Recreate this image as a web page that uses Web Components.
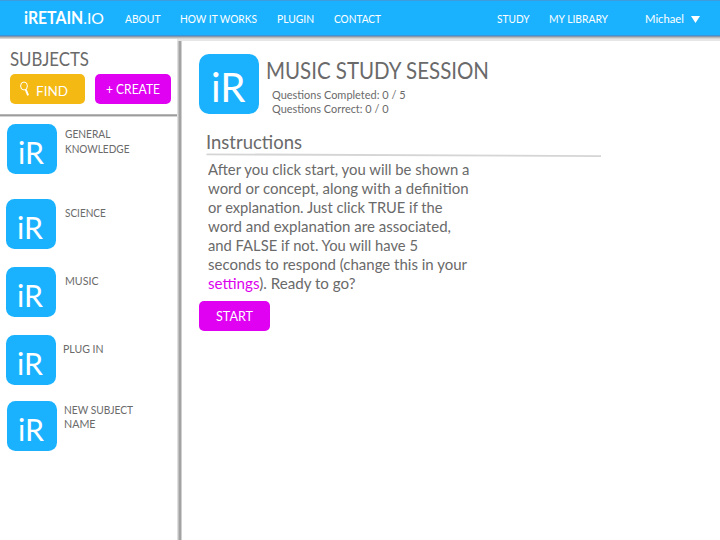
<!DOCTYPE html>
<html lang="en"><head><meta charset="utf-8"><title>iRETAIN.IO</title>
<style>html,body{margin:0;background:#fff;font-family:Lato,"Open Sans",sans-serif;color:#6a6a6a}body{width:720px;height:540px;overflow:hidden}</style>
</head><body><study-app></study-app>
<script>
const attach=(el,html)=>{el.attachShadow({mode:'open'}).innerHTML=html;};

// One line of text: the box is exactly cap-height tall and `w` pixels wide.
customElements.define('fit-text',class extends HTMLElement{
  connectedCallback(){
    if(this.shadowRoot)return;
    const cap=+this.getAttribute('cap'),w=+this.getAttribute('w'),s=cap/.72;
    attach(this,`<style>:host{display:block;flex:none;width:${w}px;height:${cap}px;font-size:${s}px}
      span{display:block;width:max-content;white-space:nowrap;line-height:${s*.666}px;transform-origin:0 50%}</style><span><slot></slot></span>`);
    const span=this.shadowRoot.querySelector('span');
    const n=span.getBoundingClientRect().width;
    if(n)span.style.transform=`scaleX(${w/n})`;
  }
});

customElements.define('text-link',class extends HTMLElement{
  constructor(){super();attach(this,`<style>:host{color:#dc00ee}</style><slot></slot>`);}
});

customElements.define('ir-tile',class extends HTMLElement{
  connectedCallback(){
    if(this.shadowRoot)return;
    const big=this.hasAttribute('big');
    attach(this,`<style>:host{display:block;flex:none;box-sizing:border-box;background:#1ab2ff;color:#fff;
      ${big?'width:60px;height:60px;border-radius:10px;padding:19.2px 0 0 12px':'width:50px;height:50px;border-radius:8.5px;padding:17.5px 0 0 11px'}}</style>
      <fit-text cap="${big?29.6:22.3}" w="${big?34.5:26}">iR</fit-text>`);
  }
});

customElements.define('app-button',class extends HTMLElement{
  constructor(){super();attach(this,`<style>:host{display:flex;box-sizing:border-box;flex:none;width:var(--w,75.5px);height:30px;border-radius:5px;background:var(--bg,#e000f2);color:#fff;padding:var(--pad)}
    </style><slot></slot>`);}
});

customElements.define('top-bar',class extends HTMLElement{
  constructor(){super();attach(this,`<style>
    :host{display:block;height:41px;background:linear-gradient(#3f9ade 0 1px,#1ab2ff 1px 35px,#3c93d6 35px 36px,#8597ad 36px 37px,#b9b9b9 37px 38px,#d6d6d6 38px 39px,#e6e6e6 39px 41px);color:#fff}
    nav{display:flex;align-items:flex-end;height:23.3px;padding:0 20px 0 24px;gap:20px}
    .logo{margin:0 .5px -1.6px 0}.right{margin-left:auto}.user{margin-left:17px}
    svg{margin:0 0 .4px -12.5px;flex:none}
    b{font-weight:700}</style>
    <nav><fit-text class="logo" cap="11.6" w="80"><b>iRETAIN</b>.IO</fit-text>
    <fit-text cap="8" w="35.5">ABOUT</fit-text><fit-text cap="8" w="77">HOW IT WORKS</fit-text>
    <fit-text cap="8" w="37">PLUGIN</fit-text><fit-text cap="8" w="47">CONTACT</fit-text>
    <fit-text class="right" cap="8" w="32.5">STUDY</fit-text><fit-text cap="8" w="59" style="margin-left:-1px">MY LIBRARY</fit-text>
    <fit-text class="user" cap="8.2" w="39">Michael</fit-text>
    <svg width="9" height="7"><path d="M0 0H9L4.5 7Z" fill="#fff"/></svg></nav>`);}
});

customElements.define('subject-item',class extends HTMLElement{
  constructor(){super();attach(this,`<style>:host{display:flex;height:50px}
    .label{display:flex;flex-direction:column;gap:6.4px;padding:var(--lp)}</style>
    <ir-tile></ir-tile><div class="label"><slot></slot></div>`);}
});

customElements.define('side-bar',class extends HTMLElement{
  constructor(){super();attach(this,`<style>
    :host{display:block;width:182px;box-sizing:border-box;flex:none}
    .head{width:177px;height:78px;box-sizing:border-box;padding:13.5px 0 0 9.5px;background:linear-gradient(#fff 0 75px,#b5b5b5 75px 76px,#9c9c9c 76px 77px,#d4d4d4 77px 78px);}
    .btns{display:flex;gap:10px;margin-top:8px}
    .list{display:grid;grid-template-rows:75px 68px 68px 66px 50px;padding:7px 0 0 6px}
    .fi{margin-right:5.5px;flex:none}</style>
    <div class="head"><fit-text cap="13.3" w="79">SUBJECTS</fit-text>
      <div class="btns"><app-button style="--bg:#f4b913;--pad:7px 0 0 10px">
        <svg class="fi" width="11" height="18" viewBox="0 0 11 18" fill="none" stroke="#fff"><ellipse cx="4" cy="5" rx="3.4" ry="4" stroke-width="1"/><path d="M5.8 8.7L8.1 14.3" stroke-width="1.9"/></svg>
        <fit-text cap="10.3" w="32" style="margin-top:5px">FIND</fit-text></app-button>
      <app-button style="--pad:12.5px 0 0 10.5px"><fit-text cap="9.1" w="54">+ CREATE</fit-text></app-button></div></div>
    <div class="list">
      <subject-item style="--lp:6.3px 0 0 8px;padding-left:1px"><fit-text cap="7.9" w="45.5">GENERAL</fit-text><fit-text cap="7.9" w="64.5">KNOWLEDGE</fit-text></subject-item>
      <subject-item style="--lp:9.5px 0 0 8.6px"><fit-text cap="7.9" w="40.8">SCIENCE</fit-text></subject-item>
      <subject-item style="--lp:10.3px 0 0 8.6px"><fit-text cap="7.9" w="33.5">MUSIC</fit-text></subject-item>
      <subject-item style="--lp:9.5px 0 0 6.8px"><fit-text cap="7.9" w="40.5">PLUG IN</fit-text></subject-item>
      <subject-item style="--lp:5.2px 0 0 7px;padding-left:1px"><fit-text cap="7.9" w="69">NEW SUBJECT</fit-text><fit-text cap="7.9" w="31.5">NAME</fit-text></subject-item>
    </div>`);}
});

customElements.define('study-session',class extends HTMLElement{
  constructor(){super();attach(this,`<style>
    :host{display:block;flex:1;min-width:0;padding:15px 0 0 17px}
    header{display:flex}
    .t{padding:9.7px 0 0 6.5px}
    .q{display:grid;gap:5.6px;padding:11.8px 0 0 6.5px}
    .i{margin:21.7px 0 0 7.3px}
    .rule{display:block;margin:4px 0 0 7px}
    .p{display:grid;gap:8.35px;margin:5.3px 0 11.3px 9px}</style>
    <header><ir-tile big></ir-tile><div class="t"><fit-text cap="16" w="223">MUSIC STUDY SESSION</fit-text>
      <div class="q"><fit-text cap="8.4" w="133.5">Questions Completed: 0 / 5</fit-text><fit-text cap="8.4" w="116.5">Questions Correct: 0 / 0</fit-text></div></div></header>
    <fit-text class="i" cap="13.6" w="96">Instructions</fit-text>
    <svg class="rule" width="396" height="5"><path d="M0.5 1.3L395 3.1" stroke="#d5d5d5" stroke-width="1.8"/></svg>
    <div class="p">
      <fit-text cap="10.8" w="261.5">After you click start, you will be shown a</fit-text>
      <fit-text cap="10.8" w="260.5">word or concept, along with a definition</fit-text>
      <fit-text cap="10.8" w="234.5">or explanation. Just click TRUE if the</fit-text>
      <fit-text cap="10.8" w="243">word and explanation are associated,</fit-text>
      <fit-text cap="10.8" w="210">and FALSE if not. You will have 5</fit-text>
      <fit-text cap="10.8" w="259">seconds to respond (change this in your</fit-text>
      <fit-text cap="10.8" w="147.5"><text-link>settings</text-link>). Ready to go?</fit-text></div>
    <app-button style="--w:71px;--pad:11.7px 0 0 17.3px"><fit-text cap="9.2" w="37">START</fit-text></app-button>`);}
});

customElements.define('study-app',class extends HTMLElement{
  constructor(){super();attach(this,`<style>
    :host{display:flex;flex-direction:column;width:720px;height:540px;background:#fff}
    .body{display:grid;grid-template-columns:177px 5px 1fr;height:499px}
    .body>side-bar{width:177px;margin-top:-2px;background:#fff}
    .bar{background:linear-gradient(90deg,#e0e0e0 0 1px,#c0c0c0 1px 2px,#a3a3a3 2px 4px,#d0d0d0 4px 5px)}
    study-session{margin-top:-2px}</style>
    <top-bar></top-bar><div class="body"><side-bar></side-bar><div class="bar"></div><study-session></study-session></div>`);}
});
</script></body></html>
